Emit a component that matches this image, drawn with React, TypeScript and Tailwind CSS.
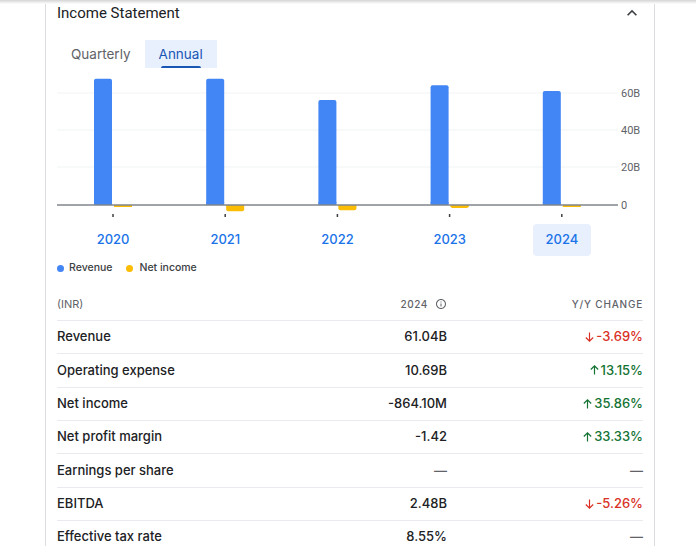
import React from "react";

const years = [
  { year: "2020", revenue: 67.6, net: -1.0 },
  { year: "2021", revenue: 67.6, net: -3.3 },
  { year: "2022", revenue: 56.2, net: -2.8 },
  { year: "2023", revenue: 64.2, net: -1.6 },
  { year: "2024", revenue: 61.04, net: -0.86 },
];

const rows = [
  { label: "Revenue", value: "61.04B", change: "-3.69%", dir: "down" },
  { label: "Operating expense", value: "10.69B", change: "13.15%", dir: "up" },
  { label: "Net income", value: "-864.10M", change: "35.86%", dir: "up" },
  { label: "Net profit margin", value: "-1.42", change: "33.33%", dir: "up" },
  { label: "Earnings per share", value: "—", change: "—", dir: "none" },
  { label: "EBITDA", value: "2.48B", change: "-5.26%", dir: "down" },
  { label: "Effective tax rate", value: "8.55%", change: "—", dir: "none" },
];

const COL = 112.2;
const BASE = 137;
const PX_PER_B = 112 / 60;

function Chart() {
  return (
    <svg width="586" height="152" className="block">
      {[25, 62, 99].map((y) => (
        <line key={y} x1="0" x2="561" y1={y} y2={y} stroke="#f1f3f4" strokeWidth="1" />
      ))}
      {years.map((d, i) => {
        const cx = COL * i + 56;
        const h = d.revenue * PX_PER_B;
        const nh = Math.max(2, -d.net * PX_PER_B);
        return (
          <g key={d.year}>
            <rect x={cx - 19} y={BASE - h} width="18" height={h} rx="2" fill="#4285f4" />
            <rect x={cx - 19} y={BASE - 3} width="18" height="3" fill="#4285f4" />
            <rect x={cx + 1} y={BASE} width="18" height={nh} rx="2" fill="#fbbc04" />
            <rect x={cx + 1} y={BASE} width="18" height={Math.min(nh, 2)} fill="#fbbc04" />
            <line x1={cx} x2={cx} y1="146" y2="149" stroke="#3c4043" strokeWidth="1.5" />
          </g>
        );
      })}
      <line x1="0" x2="561" y1={BASE} y2={BASE} stroke="#80868b" strokeWidth="1.5" />
      {[
        { y: 25, t: "60B" },
        { y: 62, t: "40B" },
        { y: 99, t: "20B" },
        { y: BASE, t: "0" },
      ].map((l) => (
        <text key={l.t} x="564" y={l.y + 4} fontSize="11" fill="#5f6368" fontFamily="Roboto, sans-serif">
          {l.t}
        </text>
      ))}
    </svg>
  );
}

function Arrow({ dir }: { dir: string }) {
  if (dir === "none") return null;
  const d = dir === "up" ? "M6 11V1.8M2 5.5L6 1.5L10 5.5" : "M6 1v9.2M2 6.5L6 10.5L10 6.5";
  return (
    <svg width="11" height="12" viewBox="0 0 12 12" className="mr-[1px]">
      <path d={d} fill="none" stroke="currentColor" strokeWidth="1.3" />
    </svg>
  );
}

export default function App() {
  return (
    <div className="w-[696px] h-[546px] overflow-hidden bg-white font-[Inter,sans-serif] text-[#202124]">
      <div className="h-[4px] bg-gradient-to-b from-[#d5d5d5] to-white" />
      <div className="ml-[45px] w-[610px] border-x border-[#dadce0] px-[11px]">
        {/* header */}
        <div className="flex h-[18px] items-center justify-between">
          <h2 className="font-[Roboto,sans-serif] text-[15px] leading-none text-[#202124]">Income Statement</h2>
          <svg width="20" height="20" viewBox="0 0 24 24" className="mr-[1px]">
            <path d="M12 8l-6 6 1.41 1.41L12 10.83l4.59 4.58L18 14z" fill="#3c4043" />
          </svg>
        </div>

        {/* tabs */}
        <div className="mt-[18px] flex h-[28px]">
          <button className="px-[14px] text-[13.5px] text-[#5f6368]">Quarterly</button>
          <button className="relative bg-[#e8f0fe] px-[14px] text-[13.5px] text-[#1a56b4]">
            Annual
            <span className="absolute bottom-0 left-[16px] right-[16px] h-[2px] rounded-t bg-[#1a56b4]" />
          </button>
        </div>

        {/* chart */}
        <Chart />

        {/* years */}
        <div className="mt-[4px] grid w-[561px] grid-cols-5">
          {years.map((d, i) => (
            <div key={d.year} className="flex justify-center">
              <div
                className={
                  i === 4
                    ? "flex h-[32px] w-[58px] items-center justify-center rounded bg-[#e8f0fe] text-[13px] font-medium text-[#1a73e8]"
                    : "flex h-[32px] w-[58px] items-center justify-center text-[13px] font-medium text-[#1a73e8]"
                }
              >
                {d.year}
              </div>
            </div>
          ))}
        </div>

        {/* legend */}
        <div className="mt-[5px] flex h-[14px] items-center text-[10.5px] font-medium text-[#3c4043]">
          <span className="mr-[5px] h-[7px] w-[7px] rounded-full bg-[#4285f4]" />
          <span>Revenue</span>
          <span className="ml-[14px] mr-[6px] h-[7px] w-[7px] rounded-full bg-[#fbbc04]" />
          <span>Net income</span>
        </div>

        {/* table header */}
        <div className="mt-[13px] flex h-[32px] items-center text-[10px] font-medium text-[#5f6368]">
          <div className="flex-1 text-[11px] font-normal">(INR)</div>
          <div className="flex items-center tracking-[0.6px]">
            2024
            <svg width="12" height="12" viewBox="0 0 24 24" className="ml-[7px]">
              <path
                d="M11 7h2v2h-2zm0 4h2v6h-2zm1-9C6.48 2 2 6.48 2 12s4.48 10 10 10 10-4.48 10-10S17.52 2 12 2zm0 18c-4.41 0-8-3.59-8-8s3.59-8 8-8 8 3.59 8 8-3.59 8-8 8z"
                fill="#5f6368"
              />
            </svg>
          </div>
          <div className="w-[196px] text-right tracking-[0.8px]">Y/Y CHANGE</div>
        </div>

        {/* rows */}
        {rows.map((r) => (
          <div
            key={r.label}
            className="flex h-[33.33px] items-center border-t border-[#e8eaed] text-[13px] font-medium"
          >
            <div className="flex-1 text-[#202124]">{r.label}</div>
            <div className="text-right text-[#202124]">
              {r.value === "—" ? <span className="text-[#5f6368]">—</span> : r.value}
            </div>
            <div
              className={
                r.dir === "down"
                  ? "flex w-[196px] items-center justify-end text-[#d93025]"
                  : r.dir === "up"
                  ? "flex w-[196px] items-center justify-end text-[#137333]"
                  : "flex w-[196px] items-center justify-end text-[#5f6368]"
              }
            >
              <Arrow dir={r.dir} />
              {r.change}
            </div>
          </div>
        ))}
      </div>
    </div>
  );
}
